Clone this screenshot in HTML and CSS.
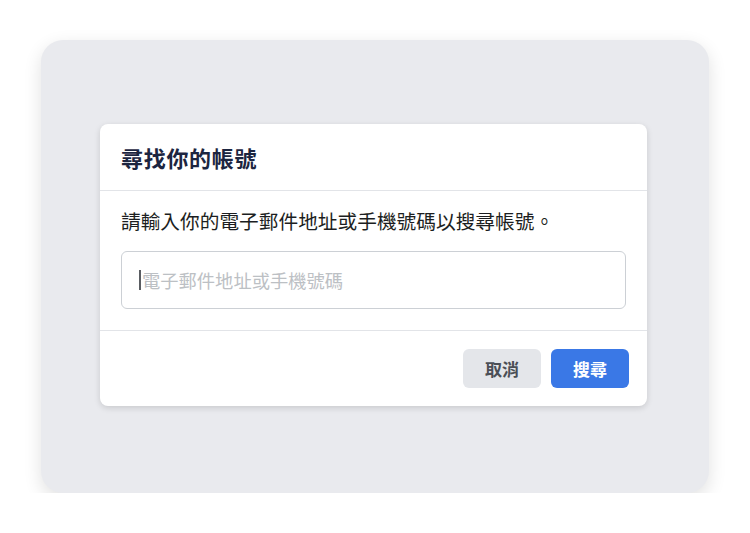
FILE: index.html
```html
<!DOCTYPE html>
<html lang="zh-Hant">
<head>
<meta charset="utf-8">
<link rel="stylesheet" href="styles.css">
</head>
<body>
<div class="frame">
  <div class="dialog">
    <div class="dialog-header">
      <h2 class="title">尋找你的帳號</h2>
    </div>
    <div class="dialog-body">
      <p class="desc">請輸入你的電子郵件地址或手機號碼以搜尋帳號。</p>
      <div class="input"><span class="caret"></span><span class="placeholder">電子郵件地址或手機號碼</span></div>
    </div>
    <div class="dialog-footer">
      <button class="btn btn-cancel">取消</button>
      <button class="btn btn-primary">搜尋</button>
    </div>
  </div>
</div>
</body>
</html>
```
FILE: styles.css
```css
html, body {
  margin: 0;
  padding: 0;
  background: #ffffff;
  font-family: "Noto Sans CJK TC", "Noto Sans", sans-serif;
}
.frame {
  margin: 40px 0 0 41px;
  width: 668px;
  height: 453px;
  box-sizing: border-box;
  padding: 84px 0 0 59px;
  background: #e9eaee;
  border-radius: 22px;
  box-shadow: 0 6px 18px rgba(0,0,0,0.12);
}
.dialog {
  width: 547px;
  background: #ffffff;
  border-radius: 8px;
  box-shadow: 0 2px 6px rgba(0,0,0,0.14);
}
.dialog-header {
  height: 67px;
  box-sizing: border-box;
  padding: 0 21px;
  display: flex;
  align-items: center;
  border-bottom: 1px solid #e2e4e8;
}
.title {
  margin: 0;
  font-size: 22px;
  letter-spacing: 0.7px;
  font-weight: 700;
  color: #1c2540;
  line-height: 28px;
}
.dialog-body {
  padding: 16px 21px 21px;
  border-bottom: 1px solid #e2e4e8;
}
.desc {
  margin: 0;
  font-size: 19.7px;
  line-height: 28px;
  color: #1c1e21;
}
.input {
  margin-top: 16px;
  height: 58px;
  box-sizing: border-box;
  border: 1px solid #ccd0d5;
  border-radius: 6px;
  display: flex;
  align-items: center;
  padding-left: 17px;
}
.caret {
  width: 2px;
  height: 20px;
  background: #5a5d62;
  margin-right: 1px;
}
.placeholder {
  font-size: 18.3px;
  color: #bcc0c4;
}
.dialog-footer {
  display: flex;
  justify-content: flex-end;
  gap: 10px;
  padding: 18px 18px 18px;
}
.btn {
  width: 78px;
  height: 39px;
  border: none;
  border-radius: 6px;
  font-family: inherit;
  font-size: 17px;
  font-weight: 700;
  cursor: pointer;
}
.btn-cancel {
  background: #e4e6ea;
  color: #4b4f56;
}
.btn-primary {
  background: #3a78e6;
  color: #ffffff;
}
```
